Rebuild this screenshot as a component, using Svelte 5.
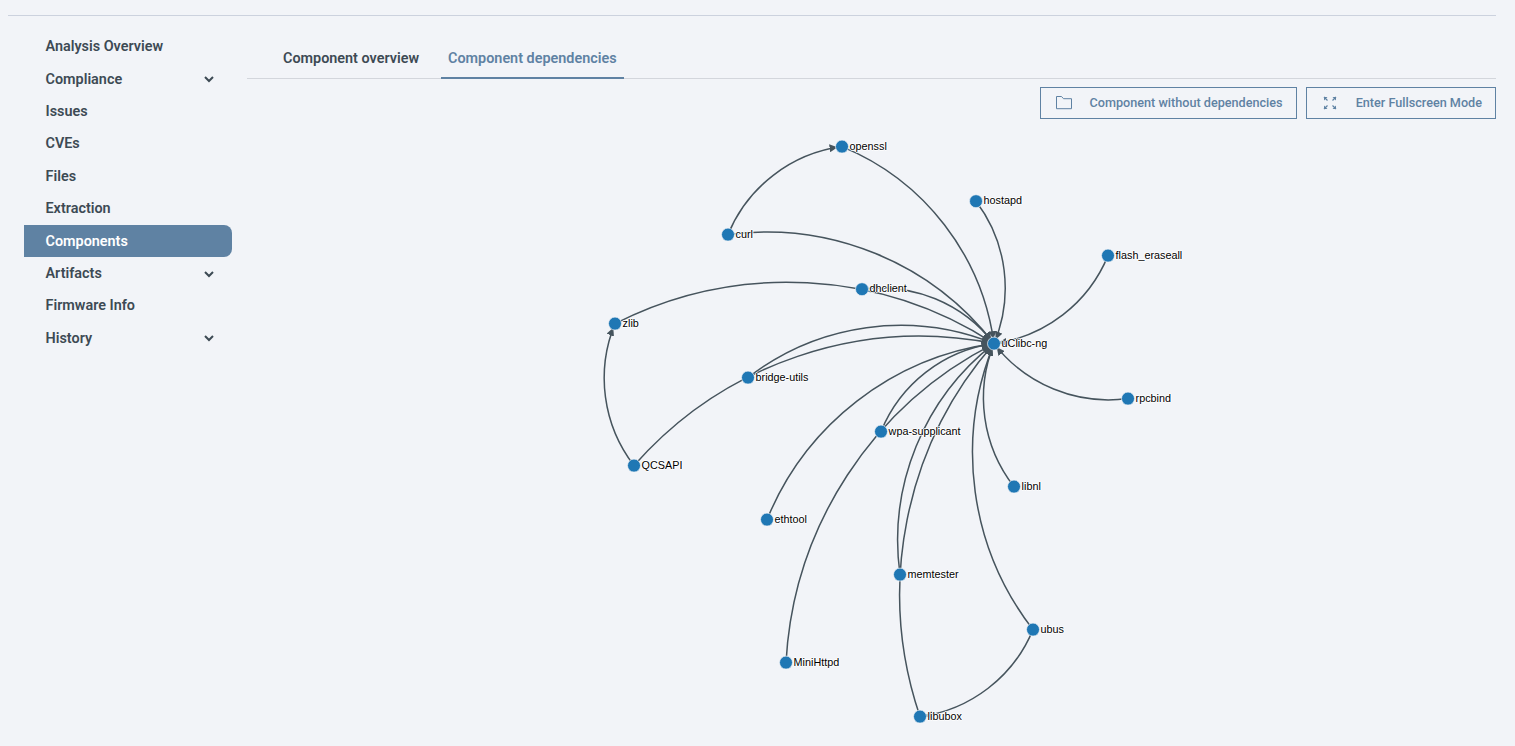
<script>
  const menu = [
    { label: "Analysis Overview" },
    { label: "Compliance", more: true },
    { label: "Issues" },
    { label: "CVEs" },
    { label: "Files" },
    { label: "Extraction" },
    { label: "Components", active: true },
    { label: "Artifacts", more: true },
    { label: "Firmware Info" },
    { label: "History", more: true }
  ];

  // graph canvas starts at x=247, y=120 in the page
  const nodes = {
    openssl: [595, 27],
    hostapd: [729, 81.6],
    curl: [481, 115],
    flash_eraseall: [861, 136],
    dhclient: [615, 169.6],
    zlib: [368, 204],
    "uClibc-ng": [747, 224],
    "bridge-utils": [501, 258],
    rpcbind: [881, 279],
    "wpa-supplicant": [634, 312],
    QCSAPI: [387, 346],
    libnl: [767, 367],
    ethtool: [520, 400],
    memtester: [653, 455],
    ubus: [786, 510],
    MiniHttpd: [539, 543],
    libubox: [673, 597]
  };

  const links = [
    ["curl", "openssl"],
    ["openssl", "uClibc-ng"],
    ["hostapd", "uClibc-ng"],
    ["curl", "uClibc-ng"],
    ["flash_eraseall", "uClibc-ng"],
    ["dhclient", "uClibc-ng"],
    ["zlib", "uClibc-ng"],
    ["bridge-utils", "uClibc-ng"],
    ["rpcbind", "uClibc-ng"],
    ["wpa-supplicant", "uClibc-ng"],
    ["QCSAPI", "uClibc-ng"],
    ["QCSAPI", "zlib"],
    ["libnl", "uClibc-ng"],
    ["ethtool", "uClibc-ng"],
    ["memtester", "uClibc-ng"],
    ["ubus", "uClibc-ng"],
    ["ubus", "libubox"],
    ["MiniHttpd", "uClibc-ng"],
    ["libubox", "uClibc-ng"]
  ];

  function arc([from, to]) {
    const [x1, y1] = nodes[from];
    const [x2, y2] = nodes[to];
    const r = Math.hypot(x2 - x1, y2 - y1);
    return `M${x1},${y1}A${r},${r} 0 0,1 ${x2},${y2}`;
  }
</script>

<div class="page">
  <div class="topline"></div>
  <div class="layout">
    <nav class="sidebar">
      {#each menu as item}
        <div class="item" class:active={item.active}>
          <span>{item.label}</span>
          {#if item.more}
            <svg class="chevron" width="12" height="12" viewBox="0 0 12 12">
              <path d="M2 4l4 4 4-4" fill="none" stroke="currentColor" stroke-width="2" />
            </svg>
          {/if}
        </div>
      {/each}
    </nav>

    <main class="content">
      <div class="tabs">
        <div class="tab">Component overview</div>
        <div class="tab selected">Component dependencies</div>
      </div>
      <div class="actions">
        <button class="wide">
          <svg width="16" height="14" viewBox="0 0 16 14">
            <path d="M.5 .5h5l2 2.2h8v10H.5z" fill="none" stroke="currentColor" stroke-width="1" />
          </svg>
          <span>Component without dependencies</span>
        </button>
        <button class="narrow">
          <svg width="14" height="14" viewBox="0 0 14 14">
            <path d="M1 1l3.5 3.5M13 1L9.5 4.5M1 13l3.5-3.5M13 13L9.5 9.5" fill="none" stroke="currentColor" stroke-width="1.2" />
            <path d="M1 1h3.5L1 4.5zM13 1H9.5L13 4.5zM1 13h3.5L1 9.5zM13 13H9.5l3.5-3.5z" fill="currentColor" />
          </svg>
          <span>Enter Fullscreen Mode</span>
        </button>
      </div>

      <svg class="graph" width="1249" height="626" viewBox="0 0.4 1249 626">
        <defs>
          <marker id="arrow" viewBox="0 -5 10 10" refX="15.6" refY="0" markerWidth="8" markerHeight="8" markerUnits="userSpaceOnUse" orient="auto">
            <path d="M0,-5L10,0L0,5" fill="#46545d" />
          </marker>
        </defs>
        {#each links as link}
          <path class="link" d={arc(link)} marker-end="url(#arrow)" />
        {/each}
        {#each Object.entries(nodes) as [name, pos]}
          <g transform="translate({pos[0]},{pos[1]})">
            <circle r="6.5" />
            <text x="7.6" y="3">{name}</text>
          </g>
        {/each}
      </svg>
    </main>
  </div>
</div>

<style>
  :global(body) {
    background: #f2f4f8;
  }

  .page {
    height: 746px;
    overflow: hidden;
    font-family: Roboto, "Liberation Sans", sans-serif;
    background: #f2f4f8;
  }

  .topline {
    height: 1px;
    margin: 15px 19px 0 8px;
    background: #ccd2de;
  }

  .layout {
    display: flex;
    padding-left: 24px;
  }

  .sidebar {
    width: 208px;
    flex-shrink: 0;
    padding-top: 14.6px;
  }

  .item {
    display: flex;
    align-items: center;
    justify-content: space-between;
    height: 32.4px;
    padding: 0 17px 0 21.5px;
    box-sizing: border-box;
    font-size: 14.4px;
    font-weight: 600;
    color: #3d4a54;
  }

  .item.active {
    background: #5f82a3;
    color: #fff;
    border-radius: 0 8px 8px 0;
  }

  .chevron {
    color: #3d4a54;
  }

  .content {
    flex: 1;
    margin-left: 15px;
    margin-right: 19px;
    min-width: 0;
  }

  .tabs {
    display: flex;
    height: 62px;
    align-items: flex-end;
    border-bottom: 1px solid #d3d6dc;
    padding-left: 14px;
  }

  .tab {
    padding: 0 22px 10px;
    margin-bottom: -1px;
    font-size: 14.4px;
    font-weight: 600;
    color: #3d4a54;
    border-bottom: 2px solid transparent;
    line-height: 16px;
  }

  .tab.selected {
    color: #5f82a3;
    border-bottom-color: #5f82a3;
    padding: 0 7px 10px;
  }

  .actions {
    display: flex;
    justify-content: flex-end;
    gap: 9px;
    margin-top: 8px;
  }

  button {
    display: flex;
    align-items: center;
    height: 32px;
    padding: 0 13px 0 15px;
    background: transparent;
    border: 1px solid #5f82a3;
    color: #5f82a3;
    font-family: inherit;
    font-size: 12.65px;
    font-weight: 500;
  }

  button span {
    margin-left: 17px;
    padding-bottom: 1px;
  }

  .narrow {
    padding-left: 16px;
  }

  .narrow span {
    margin-left: 19px;
  }

  .graph {
    display: block;
    margin-top: 1px;
  }

  .link {
    fill: none;
    stroke: #46545d;
    stroke-width: 1.5;
  }

  circle {
    fill: #1f77b4;
    stroke: #f2f4f8;
    stroke-width: 0.7;
  }

  text {
    font-family: "Liberation Sans", Arial, sans-serif;
    font-size: 10.8px;
    fill: #000;
    text-shadow: 0 1px 0 #fff, 1px 0 0 #fff, 0 -1px 0 #fff, -1px 0 0 #fff;
  }
</style>
